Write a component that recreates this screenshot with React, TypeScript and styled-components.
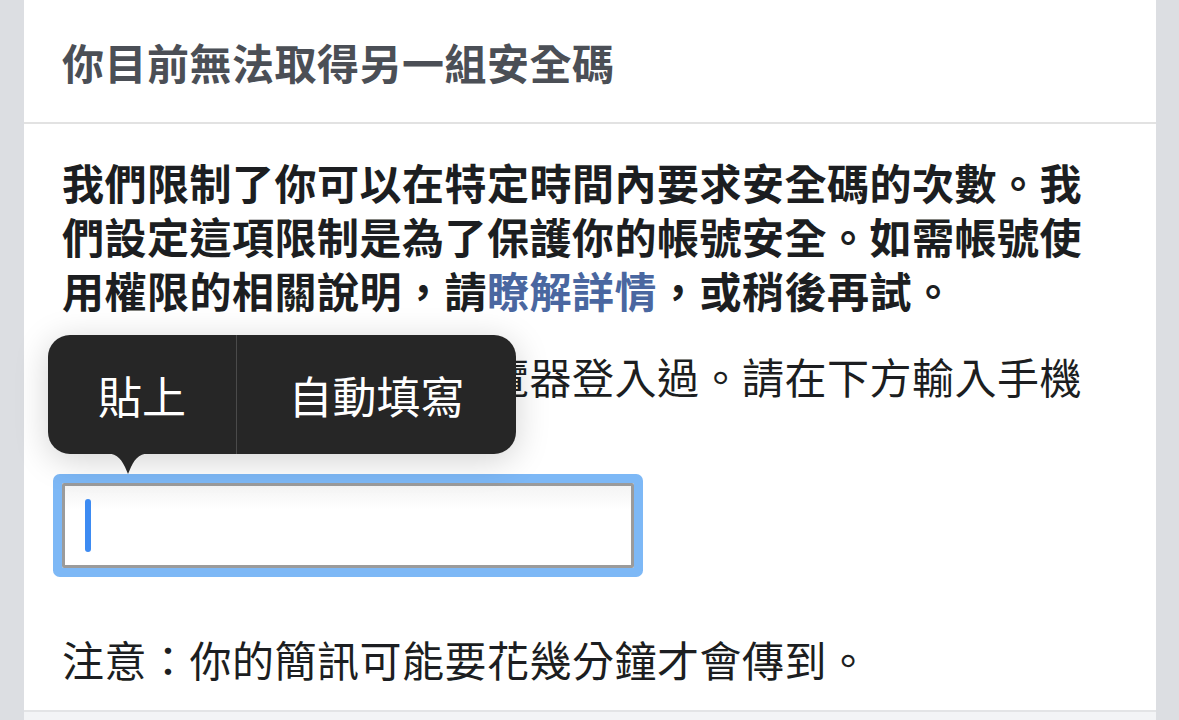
import React from 'react'
import styled, {createGlobalStyle} from 'styled-components'

const GlobalStyle = createGlobalStyle`
    body {
        margin: 0;
        background-color: #dcdee2;
        font-family: "Noto Sans CJK TC", "Noto Sans", sans-serif;
    }
`

const App = () => {
  return (
      <Container>
          <GlobalStyle />
          <Card>
              <Header>你目前無法取得另一組安全碼</Header>
              <Body>
                  <Para bold>
                      我們限制了你可以在特定時間內要求安全碼的次數。我們設定這項限制是為了保護你的帳號安全。如需帳號使用權限的相關說明，請<Link>瞭解詳情</Link>，或稍後再試。
                  </Para>
                  <Para gap={32}>
                      如果你曾經使用這個瀏覽器登入過。請在下方輸入手機號碼。
                  </Para>
                  <Field>
                      <FieldBox>
                          <Caret />
                      </FieldBox>
                      <Menu>
                          <MenuItem w={188}>貼上</MenuItem>
                          <MenuItem w={279} divided>自動填寫</MenuItem>
                          <Arrow width="52" height="24" viewBox="0 0 52 24">
                              <path d="M0 0 C14 0 18 4 23 14 L26 21 L29 14 C34 4 38 0 52 0 Z" fill="#262626" />
                          </Arrow>
                      </Menu>
                  </Field>
                  <Para gap={64}>注意：你的簡訊可能要花幾分鐘才會傳到。</Para>
              </Body>
          </Card>
          <Next />
      </Container>
  )
}

export default App

const Container = styled.div`
    width: 100%;
    height: 720px;
    overflow: hidden;
    padding: 0 23px 0 24px;
    box-sizing: border-box;
`
const Card = styled.div`
    background-color: #fff;
    border-bottom: 2px solid #e3e4e6;
`
const Header = styled.div`
    height: 122px;
    display: flex;
    align-items: center;
    padding: 0 38px;
    border-bottom: 2px solid #e2e2e2;
    font-size: 42px;
    font-weight: 700;
    letter-spacing: 0.5px;
    color: #4b4f56;
`
const Body = styled.div`
    padding: 31px 60px 24px 38px;
`
const Para = styled.p<{bold?: boolean, gap?: number}>`
    margin: ${({gap}) => gap || 0}px 0 0;
    font-size: 42px;
    line-height: 54px;
    letter-spacing: 0.5px;
    font-weight: ${({bold}) => bold ? 700 : 400};
    color: #1c1e21;
`
const Link = styled.span`
    color: #4a67a0;
`
const Field = styled.div`
    position: relative;
    margin-top: 26px;
    width: 572px;
`
const FieldBox = styled.div`
    box-sizing: border-box;
    width: 572px;
    height: 85px;
    border: 3px solid #9b9b9b;
    border-radius: 2px;
    box-shadow: 0 0 0 9px #7db8f6;
    background: linear-gradient(#f4f4f4, #fff 30%);
    display: flex;
    align-items: center;
    padding-left: 20px;
`
const Caret = styled.div`
    width: 6px;
    height: 53px;
    border-radius: 3px;
    background-color: #3d8bf2;
`
const Menu = styled.div`
    position: absolute;
    top: -148px;
    left: -14px;
    height: 119px;
    display: flex;
    background-color: #262626;
    border-radius: 22px;
    box-shadow: 0 6px 34px rgba(0, 0, 0, 0.18);
`
const MenuItem = styled.div<{w: number, divided?: boolean}>`
    width: ${({w}) => w}px;
    display: flex;
    justify-content: center;
    align-items: center;
    font-size: 44px;
    color: #fff;
    border-left: ${({divided}) => divided ? '1px solid #4a4a4a' : 'none'};
`
const Arrow = styled.svg`
    position: absolute;
    top: 118px;
    left: 54px;
`
const Next = styled.div`
    height: 40px;
    background-color: #f3f4f6;
`
